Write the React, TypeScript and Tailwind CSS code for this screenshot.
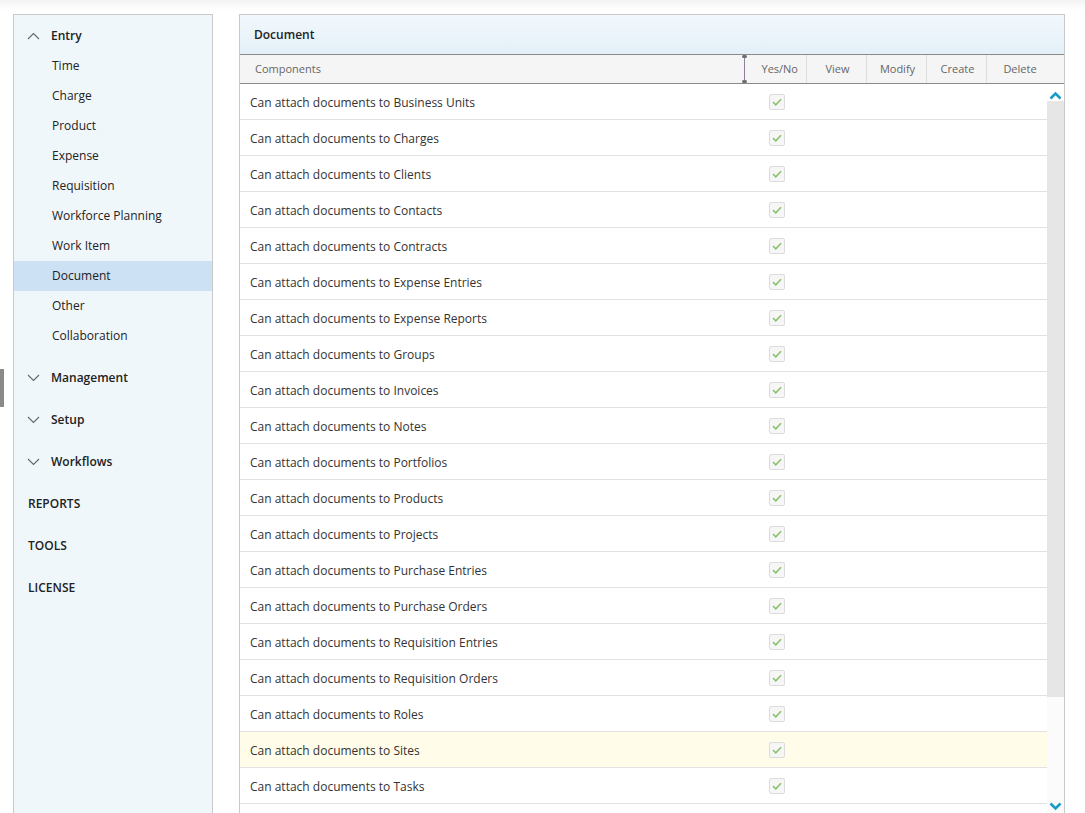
import React from "react";

const entryItems = [
  "Time",
  "Charge",
  "Product",
  "Expense",
  "Requisition",
  "Workforce Planning",
  "Work Item",
  "Document",
  "Other",
  "Collaboration",
];

const groups = ["Management", "Setup", "Workflows"];
const topLinks = ["REPORTS", "TOOLS", "LICENSE"];

const targets = [
  "Business Units",
  "Charges",
  "Clients",
  "Contacts",
  "Contracts",
  "Expense Entries",
  "Expense Reports",
  "Groups",
  "Invoices",
  "Notes",
  "Portfolios",
  "Products",
  "Projects",
  "Purchase Entries",
  "Purchase Orders",
  "Requisition Entries",
  "Requisition Orders",
  "Roles",
  "Sites",
  "Tasks",
];

const Chevron = ({ up }: { up?: boolean }) => (
  <svg width="13" height="8" viewBox="0 0 13 8" className="shrink-0">
    <polyline
      points={up ? "1,7 6.5,1.5 12,7" : "1,1 6.5,6.5 12,1"}
      fill="none"
      stroke="#666"
      strokeWidth="1.1"
    />
  </svg>
);

const Check = () => (
  <div className="w-[16px] h-[16px] rounded-[2px] border border-[#dcdcdc] bg-[#f6f6f6] flex items-center justify-center">
    <svg width="10" height="8" viewBox="0 0 10 8">
      <polyline points="1,4.2 3.8,6.8 9,1.2" fill="none" stroke="#8cc36a" strokeWidth="1.6" />
    </svg>
  </div>
);

const Sidebar = () => (
  <aside className="w-[200px] h-[820px] shrink-0 border border-[#c9c9c9] bg-[#f0f7fb] text-[12px] text-[#222]">
    <div className="h-[36px] pt-[6px] flex items-center pl-[13px] gap-[11px]">
      <Chevron up />
      <span className="font-semibold">Entry</span>
    </div>
    {entryItems.map((item) => (
      <div
        key={item}
        className={
          "h-[30px] flex items-center pl-[38px] " + (item === "Document" ? "bg-[#cde1f5]" : "")
        }
      >
        {item}
      </div>
    ))}
    <div className="h-[6px]" />
    {groups.map((g) => (
      <div key={g} className="h-[42px] flex items-center pl-[13px] gap-[11px]">
        <Chevron />
        <span className="font-semibold">{g}</span>
      </div>
    ))}
    {topLinks.map((l) => (
      <div key={l} className="h-[42px] flex items-center pl-[14px] font-semibold">
        {l}
      </div>
    ))}
  </aside>
);

const cols = ["View", "Modify", "Create", "Delete"];

const Panel = () => (
  <section className="w-[826px] h-[800px] shrink-0 border border-[#c9c9c9] border-b-0 flex flex-col overflow-hidden">
    <div className="h-[39px] shrink-0 flex items-center pl-[14px] bg-gradient-to-b from-[#f2f8fc] to-[#e3f0f8] text-[12px] font-semibold text-[#222]">
      Document
    </div>
    <div className="h-[30px] shrink-0 flex items-center border-t border-b border-[#8a8a8a] bg-[#f5f5f5] text-[11px] text-[#666]">
      <div className="w-[504px] pl-[15px] flex items-center h-full">Components</div>
      <div className="relative w-[1px] h-full bg-[#8e7f9c]">
        <div className="absolute -left-[2px] top-0 w-[5px] h-[3px] rounded-full bg-[#6f6f6f]" />
        <div className="absolute -left-[2px] bottom-0 w-[5px] h-[3px] rounded-full bg-[#6f6f6f]" />
      </div>
      <div className="w-[62px] h-full flex items-center justify-end pr-[8px] border-r border-[#dedede]">Yes/No</div>
      {cols.map((c) => (
        <div key={c} className="w-[60px] h-full flex items-center justify-center pl-[2px] border-r border-[#dedede] last:border-r-0 last:w-[64px]">
          {c}
        </div>
      ))}
    </div>
    <div className="flex flex-1 min-h-0">
      <div className="w-[807px] flex flex-col">
        {targets.map((t) => (
          <div
            key={t}
            className={
              "h-[36px] shrink-0 flex items-center border-b border-[#e2e2e2] text-[12px] text-[#333] " +
              (t === "Sites" ? "bg-[#fffde9]" : "bg-white")
            }
          >
            <div className="w-[506px] pl-[10px] pt-[2px]">Can attach documents to {t}</div>
            <div className="w-[62px] flex justify-center pt-[1px]">
              <Check />
            </div>
          </div>
        ))}
      </div>
      <div className="w-[17px] flex flex-col bg-[#fbfbfb]">
        <div className="h-[17px] flex items-end justify-center pb-[1px] bg-white">
          <svg width="13" height="9" viewBox="0 0 13 9">
            <polyline points="1.5,7.5 6.5,2.5 11.5,7.5" fill="none" stroke="#1a9cc8" strokeWidth="2.6" />
          </svg>
        </div>
        <div className="h-[596px] bg-[#e6e6e6]" />
        <div className="flex-1" />
        <div className="h-[12px] flex items-start justify-center">
          <svg width="13" height="9" viewBox="0 0 13 9">
            <polyline points="1.5,1.5 6.5,6.5 11.5,1.5" fill="none" stroke="#1a9cc8" strokeWidth="2.6" />
          </svg>
        </div>
      </div>
    </div>
  </section>
);

export default function App() {
  return (
    <div
      className="relative h-[813px] w-[1085px] overflow-hidden bg-white"
      style={{ fontFamily: '"Open Sans", "Noto Sans", sans-serif' }}
    >
      <div className="h-[10px] bg-gradient-to-b from-[#f3f3f3] to-white" />
      <div className="absolute left-0 top-[369px] w-[4px] h-[38px] bg-[#8a8a8a]" />
      <div className="flex pt-[4px] pl-[13px] gap-[26px]">
        <Sidebar />
        <Panel />
      </div>
    </div>
  );
}
